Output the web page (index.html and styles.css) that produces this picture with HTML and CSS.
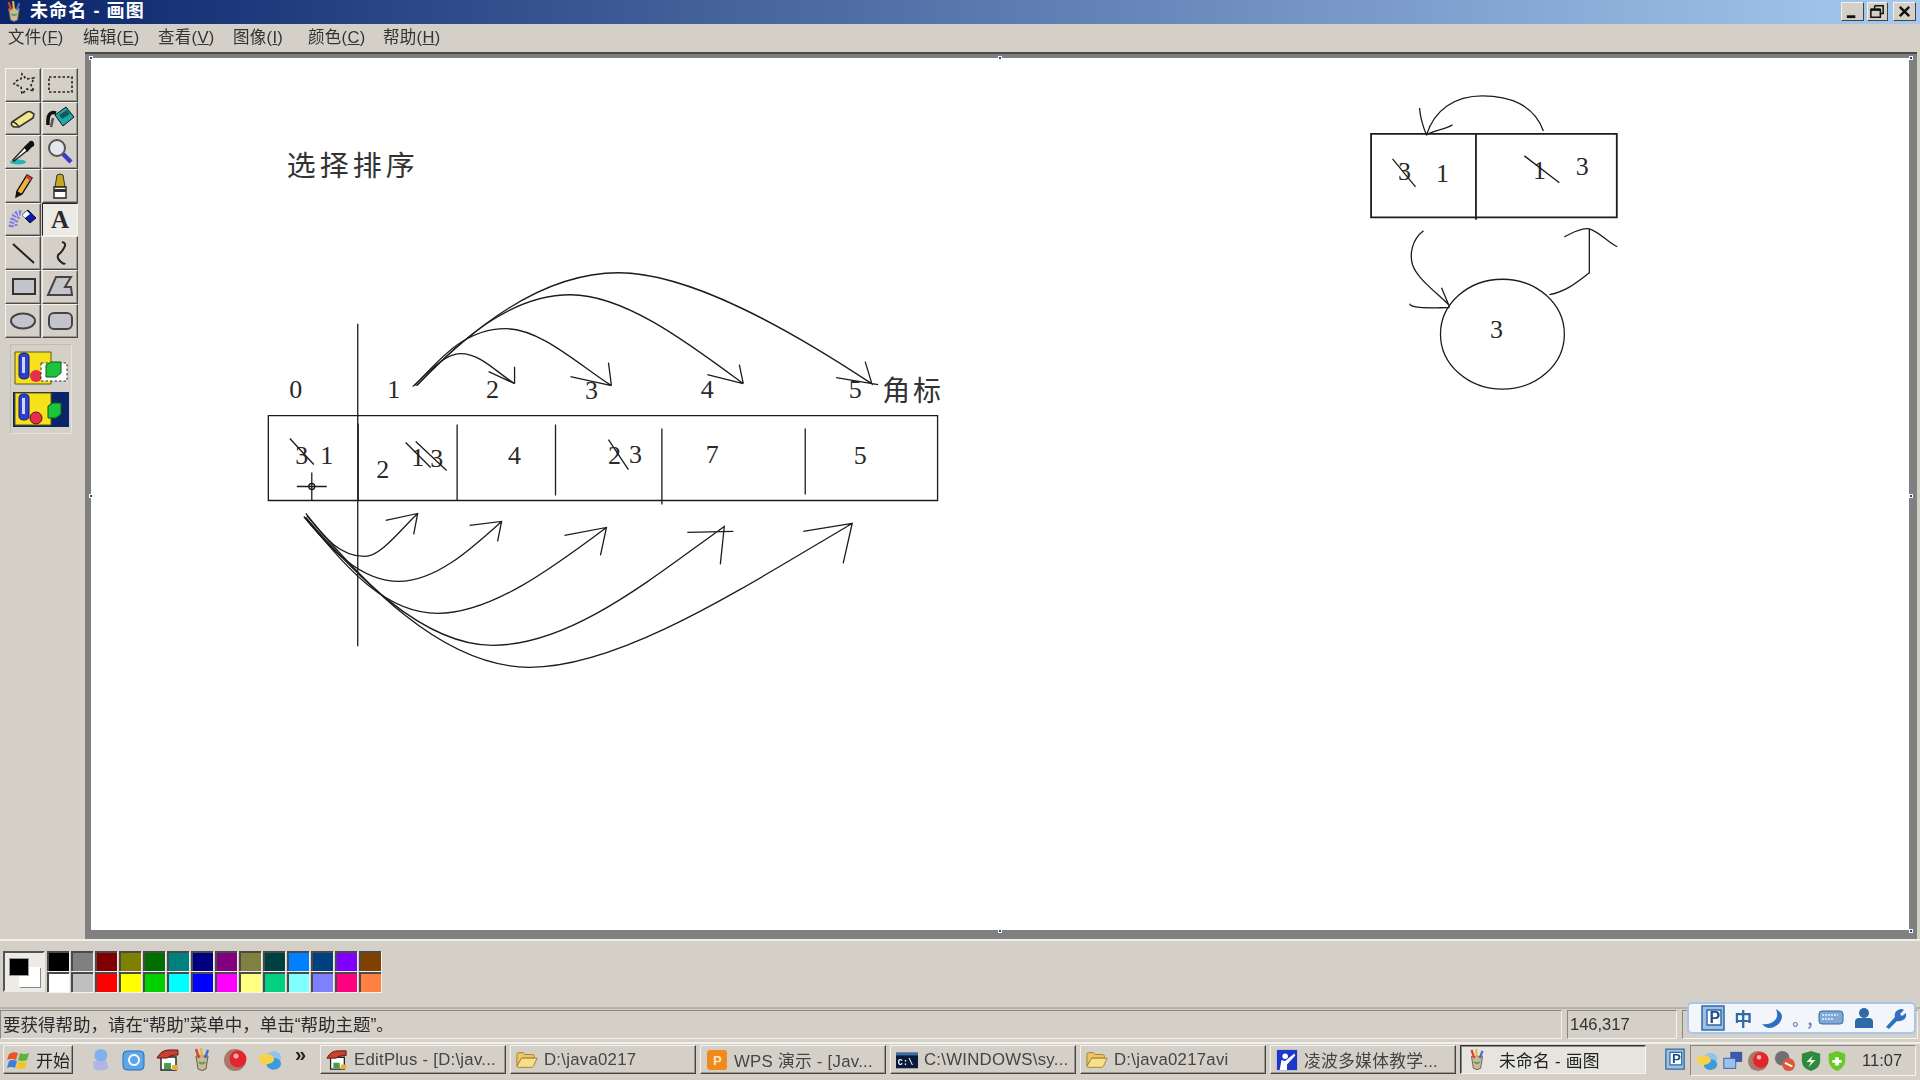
FILE: index.html
```html
<!DOCTYPE html>
<html lang="zh-CN">
<head>
<meta charset="utf-8">
<title>未命名 - 画图</title>
<link rel="stylesheet" href="styles.css">
</head>
<body>
<svg class="defs" width="0" height="0">
  <defs>
    <symbol id="paint" viewBox="0 0 20 24">
      <path d="M4 8l2 13q4 3 8 0l2-13z" fill="#c8b9a0" stroke="#6d5a4a"/>
      <path d="M4 1l3 9" stroke="#d8432c" stroke-width="2.4"/>
      <path d="M9 0l1 10" stroke="#e2b93c" stroke-width="2.4"/>
      <path d="M16 2l-3 8" stroke="#3f6fc8" stroke-width="2.4"/>
      <path d="M7 14q3 3 6 0" stroke="#58a34d" stroke-width="2" fill="none"/>
    </symbol>
    <symbol id="folder" viewBox="0 0 24 20">
      <path d="M1 16V4q0-2 2-2h5l2 2h8q2 0 2 2v2H7z" fill="#e8c768" stroke="#a67c1e"/>
      <path d="M1 17L6 8h17l-4 9q-1 1-2 1H3q-2 0-2-1z" fill="#f7e08c" stroke="#a67c1e"/>
    </symbol>
    <symbol id="editplus" viewBox="0 0 24 24">
      <path d="M5 9h15v13H5z" fill="#fff" stroke="#222" stroke-width="1.4"/>
      <path d="M1 10Q5 2 13 2h9v5q-8 0-11 3z" fill="#c9402f" stroke="#5c1a12"/>
      <path d="M8 15h7v6H8z" fill="#4a9c4a"/><path d="M16 17h6v5h-6z" fill="#e6b23c"/>
    </symbol>
    <symbol id="balloon" viewBox="0 0 26 22">
      <ellipse cx="17" cy="8" rx="8" ry="6.5" fill="#8ec4ee"/>
      <ellipse cx="17" cy="15" rx="8" ry="6.5" fill="#3c9ae0"/>
      <ellipse cx="9" cy="10" rx="8.5" ry="5.5" fill="#f6d24a"/>
      <path d="M6 14l2 4 3-4z" fill="#f6d24a"/>
    </symbol>
    <symbol id="redball" viewBox="0 0 24 24">
      <circle cx="11" cy="12" r="11" fill="#a8786a"/>
      <circle cx="14" cy="11" r="8.5" fill="#e3262c"/>
      <circle cx="12" cy="8" r="2.5" fill="#f8b0b0"/>
    </symbol>
    <symbol id="pbox" viewBox="0 0 24 26">
      <path d="M1 1h22v24H1z" fill="#9fc0de" stroke="#2f6aa8" stroke-width="1.5"/>
      <path d="M6 5h14v15H6z" fill="#fff" stroke="#2f6aa8" stroke-width="1.5"/>
      <text x="8.5" y="18" class="pglyph">P</text>
    </symbol>
    <symbol id="shapes" viewBox="0 0 54 34">
      <path d="M1 1h36v32H1z" fill="#f5e21a" stroke="#5e5a10"/>
      <path d="M5 6q0-4 5-4t5 4v18q0 4-5 4t-5-4z" fill="#2c3fd0" stroke="#101a70"/>
      <path d="M8 6h3v16H8z" fill="#cfd6ff"/>
    </symbol>
  </defs>
</svg>

<header class="titlebar">
  <svg class="title-icon"><use href="#paint"/></svg>
  <span class="title-text">未命名 - 画图</span>
  <div class="win-btns">
    <button class="win-btn"><svg viewBox="0 0 22 18"><path d="M5 13h9v3H5z" fill="#111"/></svg></button>
    <button class="win-btn win-btn-narrow"><svg viewBox="0 0 20 18"><path d="M7 3h9v8h-3M7 3v3" fill="none" stroke="#111" stroke-width="1.6"/><path d="M3 7h10v8H3z" fill="none" stroke="#111" stroke-width="1.6"/><path d="M3 7h10" stroke="#111" stroke-width="2.6"/></svg></button>
    <button class="win-btn win-btn-close"><svg viewBox="0 0 22 18"><path d="M6 4l10 10M16 4L6 14" stroke="#111" stroke-width="2.6"/></svg></button>
  </div>
</header>

<nav class="menubar">
  <span class="menu-item">文件(<u>F</u>)</span>
  <span class="menu-item">编辑(<u>E</u>)</span>
  <span class="menu-item">查看(<u>V</u>)</span>
  <span class="menu-item">图像(<u>I</u>)</span>
  <span class="menu-item">颜色(<u>C</u>)</span>
  <span class="menu-item">帮助(<u>H</u>)</span>
</nav>

<main class="workspace">
  <aside class="toolbox">
    <div class="tools">
      <button class="tool"><svg viewBox="0 0 30 28"><path d="M8 10l5-2 1-5 4 5 8-1-3 7 3 6-7-2-5 5-1-7-7-3z" fill="none" stroke="#222" stroke-width="1.6" stroke-dasharray="2.5 2"/></svg></button>
      <button class="tool"><svg viewBox="0 0 30 28"><path d="M4 6h23v15H4z" fill="none" stroke="#222" stroke-width="1.6" stroke-dasharray="2.5 2"/></svg></button>
      <button class="tool"><svg viewBox="0 0 30 28"><path d="M4 17L19 7q2-1 4 0l3 2-1 4-14 9H6q-4-2-2-5z" fill="#f4e88a" stroke="#333" stroke-width="1.6"/><path d="M4 17q4 0 7 5" stroke="#333" stroke-width="1.3" fill="none"/></svg></button>
      <button class="tool"><svg viewBox="0 0 30 28"><path d="M10 10l11-8 8 10-11 9z" fill="#20a8a8" stroke="#111"/><path d="M14 10l8-5 3 4-8 5z" fill="#0c5a5a"/><path d="M11 8Q2 5 3 20" stroke="#111" stroke-width="3.5" fill="none"/><path d="M6 22l2-9" stroke="#555" stroke-width="2.500"/></svg></button>
      <button class="tool"><svg viewBox="0 0 30 28"><ellipse cx="10" cy="24" rx="8" ry="2.5" fill="#28b4b4"/><path d="M6 23l-1-1 12-13 3 3z" fill="#fff" stroke="#222" stroke-width="1.4"/><path d="M16 9l6-6q3-1 4 2t-2 4l-5 5z" fill="#111"/></svg></button>
      <button class="tool"><svg viewBox="0 0 30 28"><circle cx="12" cy="10" r="8" fill="#e6e6ee" stroke="#555" stroke-width="2"/><path d="M18 16l8 8" stroke="#3a3ac8" stroke-width="4.5"/></svg></button>
      <button class="tool"><svg viewBox="0 0 30 28"><path d="M9 19L19 3l5 3-10 16-6 3z" fill="#f0b040" stroke="#111" stroke-width="1.4"/><path d="M19 3l5 3-1.500 2.500-5-3z" fill="#d23a3a"/><path d="M8 25l1-6 5 3z" fill="#111"/></svg></button>
      <button class="tool"><svg viewBox="0 0 30 28"><path d="M12 3q3-2 6 0l2 12H10z" fill="#c8a81e" stroke="#333"/><path d="M9 15h12v11H9z" fill="#fff" stroke="#222" stroke-width="1.4"/><path d="M9 17h12v3H9z" fill="#333"/></svg></button>
      <button class="tool"><svg viewBox="0 0 30 28"><path d="M14 9l6-5 8 8-6 5z" fill="#0a1ea8" stroke="#111"/><path d="M14 9l5-4 3 3-5 4z" fill="#fff"/><path d="M13 7Q5 5 3 22" stroke="#7a7ae6" stroke-width="5" stroke-dasharray="2 1.500" fill="none"/><path d="M11 11Q8 14 8 20" stroke="#7a7ae6" stroke-width="3" stroke-dasharray="2 2" fill="none"/></svg></button>
      <button class="tool tool-active"><span class="tool-a">A</span></button>
      <button class="tool"><svg viewBox="0 0 30 28"><path d="M5 5l21 19" stroke="#222" stroke-width="2"/></svg></button>
      <button class="tool"><svg viewBox="0 0 30 28"><path d="M17 3q5 1 2 6t-5 6q-3 3 1 7t5 2" stroke="#222" stroke-width="2" fill="none"/></svg></button>
      <button class="tool"><svg viewBox="0 0 30 28"><path d="M5 6h22v15H5z" fill="#c4c4cc" stroke="#333" stroke-width="2"/></svg></button>
      <button class="tool"><svg viewBox="0 0 30 28"><path d="M11 4h15l-6 10h6l1 8H3z" fill="#c4c4cc" stroke="#444" stroke-width="2"/></svg></button>
      <button class="tool"><svg viewBox="0 0 30 28"><ellipse cx="15" cy="14" rx="12" ry="7.500" fill="#c4c4cc" stroke="#444" stroke-width="2"/></svg></button>
      <button class="tool"><svg viewBox="0 0 30 28"><rect x="4" y="6" width="23" height="16" rx="5" fill="#c4c4cc" stroke="#444" stroke-width="2"/></svg></button>
    </div>
    <div class="tool-options">
      <div class="option">
        <svg viewBox="0 0 54 34"><use href="#shapes" width="54" height="34"/><circle cx="22" cy="25" r="6" fill="#e62e4a"/><path d="M27 12h26v18H27z" fill="#fff" stroke="#333" stroke-dasharray="2.500 2"/><path d="M32 14l5-3h10v11l-5 4H32z" fill="#1cc43c" stroke="#0b5a1e"/></svg>
      </div>
      <div class="option option-on">
        <svg viewBox="0 0 54 34"><use href="#shapes" width="54" height="34"/><circle cx="22" cy="26" r="6" fill="#e62e4a" stroke="#5a1010"/><path d="M34 14l5-3h8v11l-5 4h-8z" fill="#1cc43c" stroke="#0b5a1e"/></svg>
      </div>
    </div>
  </aside>

  <section class="canvas-frame">
    <div class="canvas">
      <svg class="drawing" viewBox="91 58 1818 873">
        <text x="286" y="176" class="heading">选择排序</text>

        <g class="num">
          <text x="295" y="400">0</text><text x="393" y="400">1</text><text x="492" y="400">2</text>
          <text x="591" y="401">3</text><text x="707" y="400">4</text><text x="855" y="400">5</text>
          <text x="301" y="466">3</text><text x="326" y="466">1</text><text x="382" y="480">2</text>
          <text x="417" y="468">1</text><text x="436" y="469">3</text><text x="514" y="466">4</text>
          <text x="614" y="466">2</text><text x="635" y="465">3</text><text x="712" y="465">7</text>
          <text x="860" y="466">5</text>
          <text x="1405" y="182">3</text><text x="1443" y="184">1</text><text x="1540" y="181">1</text>
          <text x="1583" y="177">3</text><text x="1497" y="340">3</text>
        </g>
        <text x="882" y="401" class="label">角标</text>

        <g class="ink">
          <path d="M267.500 416H937.500V501H267.500z"/>
          <path d="M357 324V647M357.500 424V501" />
          <path d="M456.500 425V501M555 425V496M661.500 429V505M805 429V495"/>
          <path d="M289 439L313 465M405 443L430 468M415 442L446 471M608 440L628 470"/>
          <path d="M296 487H326M311 473V501"/><circle cx="311" cy="487" r="3"/>

          <path d="M412 387C430 370 445 354 460 354C480 354 495 372 514 384M514 367V384M488 372L514 384"/>
          <path d="M414 386C440 358 465 329 505 329C540 329 578 365 611 386M608 363L611 386M570 377L611 386"/>
          <path d="M416 386C460 340 510 295 570 295C625 295 690 345 743 384M739 365L743 384M707 375L743 384"/>
          <path d="M416 386C470 330 540 273 618 273C690 273 790 330 873 385M865 362L872 385M836 378L878 385"/>

          <path d="M305 514C325 540 340 557 364 557C380 557 400 530 417 514M385 521L417 514L413 535"/>
          <path d="M303 517C330 550 360 582 398 582C435 582 470 550 501 522M469 526L501 522L497 542"/>
          <path d="M304 518C340 560 380 614 437 614C490 614 550 570 606 528M564 536L606 528L600 556"/>
          <path d="M305 518C350 570 420 646 492 646C570 646 650 580 724 527L720 565M687 533L733 532"/>
          <path d="M306 516C360 580 440 668 529 668C620 668 740 590 852 524L843 564M803 532L852 524"/>

          <path class="heavy" d="M1371.500 134H1617.500V217.500H1371.500z"/>
          <path class="heavy" d="M1476.500 134V220"/>
          <path d="M1393 159L1416 187M1525 156L1560 183"/>
          <path d="M1544 131C1535 105 1510 96 1483 96C1455 96 1435 110 1427 135M1420 108C1421 120 1424 128 1427 135C1435 130 1445 130 1453 125"/>
          <ellipse cx="1503" cy="334.500" rx="62" ry="55"/>
          <path d="M1424 231C1412 240 1410 255 1413 265C1418 280 1440 295 1450 306M1410 304C1412 309 1430 308 1450 308M1442 288L1450 307"/>
          <path d="M1550 295C1565 292 1575 285 1590 273V229M1565 237C1572 234 1580 228 1590 229C1600 232 1608 242 1618 247"/>
        </g>
      </svg>
    </div>
    <i class="handle handle-tl"></i><i class="handle handle-tm"></i><i class="handle handle-tr"></i>
    <i class="handle handle-ml"></i><i class="handle handle-mr"></i>
    <i class="handle handle-bm"></i><i class="handle handle-br"></i>
  </section>
</main>

<section class="palette">
  <div class="current-colors">
    <span class="cur-back"></span><span class="cur-fore"></span>
  </div>
  <div class="swatches">
    <i class="sw c-000000"></i><i class="sw c-808080"></i><i class="sw c-800000"></i><i class="sw c-808000"></i><i class="sw c-006e00"></i><i class="sw c-008080"></i><i class="sw c-000080"></i><i class="sw c-800080"></i><i class="sw c-808040"></i><i class="sw c-004040"></i><i class="sw c-0080ff"></i><i class="sw c-004080"></i><i class="sw c-8000ff"></i><i class="sw c-804000"></i>
    <i class="sw c-ffffff"></i><i class="sw c-c0c0c0"></i><i class="sw c-ff0000"></i><i class="sw c-ffff00"></i><i class="sw c-00d000"></i><i class="sw c-00ffff"></i><i class="sw c-0000ff"></i><i class="sw c-ff00ff"></i><i class="sw c-ffff80"></i><i class="sw c-00d080"></i><i class="sw c-80ffff"></i><i class="sw c-8080ff"></i><i class="sw c-ff0080"></i><i class="sw c-ff8040"></i>
  </div>
</section>

<section class="statusbar">
  <div class="status-main">要获得帮助，请在“帮助”菜单中，单击“帮助主题”。</div>
  <div class="status-coord">146,317</div>
  <div class="status-rest"></div>
  <div class="ime">
    <svg class="ime-p"><use href="#pbox"/></svg>
    <span class="ime-zh">中</span>
    <svg class="ime-ic" viewBox="0 0 22 22"><path d="M15 2q3 8-2 12t-12 3q5 6 12 3t8-10q0-5-6-8z" fill="#2f6fc0"/></svg>
    <span class="ime-dots">。,</span>
    <svg class="ime-ic ime-kb" viewBox="0 0 26 18"><rect x="1" y="2" width="24" height="13" rx="3" fill="#7fa8d8" stroke="#2f6aa8"/><path d="M4 6h16M4 10h12" stroke="#eaf2fb" stroke-width="1.500" stroke-dasharray="2 1"/></svg>
    <svg class="ime-ic" viewBox="0 0 22 22"><circle cx="11" cy="6" r="5" fill="#2f6aa8"/><path d="M2 21v-6q0-4 4-4h10q4 0 4 4v6z" fill="#2f6aa8"/></svg>
    <svg class="ime-ic" viewBox="0 0 22 22"><path d="M2 20l9-10q-1-5 3-7t6 0l-4 4 2 2 4-3q1 5-3 7t-6 1l-8 8z" fill="#2f6fc0"/></svg>
  </div>
</section>

<footer class="taskbar">
  <button class="start">
    <svg viewBox="0 0 24 22"><path d="M2 5q4-3 9-1l-2 7q-4-2-9 0z" fill="#e8552a"/><path d="M13 4q4 2 9 0l-2 7q-5 2-9 0z" fill="#5db43a"/><path d="M0 12q4-2 8 0l-2 7q-4-2-8 0z" fill="#3f7fd8" transform="translate(2 0)"/><path d="M11 12q4 2 9 0l-2 7q-5 2-9 0z" fill="#f3c32c"/></svg>
    <span>开始</span>
  </button>
  <div class="quick">
    <svg viewBox="0 0 22 26"><circle cx="12" cy="8" r="7" fill="#7fb2ec"/><path d="M4 14h14l2 8q-8 5-16 0z" fill="#b0b4e6"/></svg>
    <svg viewBox="0 0 24 24"><rect x="1" y="3" width="21" height="19" rx="4" fill="#5ca6ea" stroke="#2b6cb8"/><circle cx="12" cy="12" r="5" fill="none" stroke="#fff" stroke-width="2"/></svg>
    <svg><use href="#editplus"/></svg>
    <svg><use href="#paint"/></svg>
    <svg><use href="#redball"/></svg>
    <svg><use href="#balloon"/></svg>
    <span class="chevron">»</span>
  </div>
  <div class="tasks">
    <button class="task"><svg><use href="#editplus"/></svg><span>EditPlus - [D:\jav...</span></button>
    <button class="task"><svg><use href="#folder"/></svg><span>D:\java0217</span></button>
    <button class="task"><svg viewBox="0 0 22 22"><rect x="1" y="1" width="20" height="20" rx="3" fill="#f08a1c"/><text x="7" y="16" class="wpsglyph">P</text></svg><span>WPS 演示 - [Jav...</span></button>
    <button class="task"><svg viewBox="0 0 24 20"><path d="M0 2h24v17H0z" fill="#0a1a3c"/><path d="M0 2h24v3H0z" fill="#3a6ea8"/><text x="2" y="15" class="cmdglyph">C:\</text></svg><span>C:\WINDOWS\sy...</span></button>
    <button class="task"><svg><use href="#folder"/></svg><span>D:\java0217avi</span></button>
    <button class="task"><svg viewBox="0 0 24 24"><path d="M1 1h22v22H1z" fill="#1c38c8"/><circle cx="10" cy="8" r="3" fill="#fff"/><path d="M4 23l2-11 4 1 10-8 1 2-9 10v6z" fill="#fff"/></svg><span>凌波多媒体教学...</span></button>
    <button class="task task-active"><svg><use href="#paint"/></svg><span>未命名 - 画图</span></button>
  </div>
  <svg class="tray-p"><use href="#pbox"/></svg>
  <div class="tray">
    <svg viewBox="0 0 26 22"><use href="#balloon" width="26" height="22"/></svg>
    <svg viewBox="0 0 24 24"><rect x="9" y="2" width="13" height="11" fill="#3c5aa8"/><rect x="2" y="9" width="13" height="11" fill="#9ac0ee" stroke="#3c5aa8"/></svg>
    <svg viewBox="0 0 24 24"><use href="#redball" width="24" height="24"/></svg>
    <svg viewBox="0 0 24 24"><circle cx="9" cy="9" r="8" fill="#6f6f74"/><circle cx="16" cy="16" r="7" fill="#e0583c"/><path d="M12 14l8 4" stroke="#fff" stroke-width="2"/></svg>
    <svg viewBox="0 0 24 24"><path d="M12 1l10 3v8q0 8-10 11Q2 20 2 12V4z" fill="#2c8c3c"/><path d="M14 6l-7 7h5l-3 6 8-8h-5z" fill="#e8f5e0"/></svg>
    <svg viewBox="0 0 24 24"><path d="M12 1l9 3v9q-2 7-9 10-7-3-9-10V4z" fill="#68c828"/><path d="M10 8h4v3h3v3h-3v3h-4v-3H7v-3h3z" fill="#fff"/></svg>
    <time class="clock">11:07</time>
  </div>
</footer>
</body>
</html>
```

FILE: styles.css
```css
* { box-sizing: border-box; }
html, body { margin: 0; height: 100%; overflow: hidden; }
body {
  display: flex;
  flex-direction: column;
  width: 1920px;
  height: 1080px;
  background: #d4d0c8;
  color: #1c1c1c;
  font-family: "Liberation Sans", "Noto Sans CJK SC", sans-serif;
  filter: blur(0.45px);
}
button { font: inherit; color: inherit; margin: 0; padding: 0; }
.defs { position: absolute; }
.pglyph { font: bold 16px "Liberation Sans", sans-serif; fill: #1f4f8a; }
.wpsglyph { font: bold 13px "Liberation Sans", sans-serif; fill: #ffe9c0; }
.cmdglyph { font: bold 9px "Liberation Mono", monospace; fill: #fff; }

/* title bar */
.titlebar {
  flex: 0 0 24px;
  height: 24px;
  min-height: 0;
  overflow: hidden;
  display: flex;
  align-items: center;
  padding: 0 4px 0 5px;
  background: linear-gradient(90deg, #0a246a 0%, #a6caf0 100%);
  color: #fff;
}
.title-icon { width: 18px; height: 22px; flex: none; }
.title-text { margin: -2px 0 0 7px; font-size: 18px; font-weight: 700; letter-spacing: 1.1px; line-height: 1; white-space: nowrap; }
.win-btns { margin-left: auto; margin-top: -1px; display: flex; gap: 3px; align-items: center; }
.win-btn {
  width: 23px; height: 19px;
  display: block;
  background: #d4d0c8;
  border: 1px solid;
  border-color: #f4f2ec #444 #444 #f4f2ec;
}
.win-btn svg { display: block; width: 100%; height: 100%; }
.win-btn-narrow { width: 21px; }
.win-btn-close { margin-left: 2px; }

/* menu */
.menubar {
  flex: 0 0 28px;
  height: 28px;
  min-height: 0;
  overflow: hidden;
  display: flex;
  align-items: center;
  gap: 17px;
  padding: 0 0 2px 8px;
  font-size: 16.500px;
  line-height: 1;
  color: #333;
}
.menu-item { white-space: nowrap; width: 58px; letter-spacing: .3px; }
.menu-item u { text-decoration-thickness: 1px; }

/* workspace */
.workspace { flex: 1 1 0; min-height: 0; display: flex; }
.toolbox { flex: 0 0 85px; padding: 16px 0 0 5px; background: #d4d0c8; }
.tools { display: grid; grid-template-columns: 36px 36px; grid-auto-rows: 33.700px; column-gap: 1px; width: 73px; }
.tool {
  display: flex; align-items: center; justify-content: center;
  background: #d4d0c8;
  border: 1px solid;
  border-color: #f4f2ec #4a4a4a #4a4a4a #f4f2ec;
  box-shadow: inset -1px -1px 0 #9a978f;
}
.tool svg { width: 30px; height: 28px; display: block; }
.tool-active { background: #eceae5; border-color: #222 #f4f2ec #f4f2ec #222; box-shadow: none; }
.tool-a { font: 700 25px "Liberation Serif", serif; color: #2a2a2a; line-height: 1; }
.tool-options {
  width: 62px; height: 90px;
  margin: 6px 0 0 5px;
  padding: 6px 2px;
  border: 1px solid;
  border-color: #c0bdb5 #e6e4de #e6e4de #c0bdb5;
  display: flex; flex-direction: column; gap: 7px;
}
.option { height: 34px; display: flex; justify-content: center; align-items: center; }
.option svg { width: 54px; height: 34px; display: block; }
.option-on { height: 38px; background: #0a246a; }

.canvas-frame {
  position: relative;
  flex: 1 1 0;
  min-width: 0;
  margin-right: 3px;
  padding: 6px 8px 9px 6px;
  background: #808080;
  box-shadow: inset 0 2px 0 #4a4a4a;
}
.canvas { height: 100%; background: #fff; }
.drawing { display: block; width: 100%; height: 100%; }
.handle { position: absolute; width: 4px; height: 4px; background: #2a3fa0; border: 1px solid #fff; }
.handle-tl { left: 4px; top: 4px; }
.handle-tm { left: 913px; top: 4px; }
.handle-tr { right: 4px; top: 4px; }
.handle-ml { left: 4px; top: 442px; }
.handle-mr { right: 4px; top: 442px; }
.handle-bm { left: 913px; bottom: 6px; }
.handle-br { right: 4px; bottom: 6px; }

.heading { font: 400 29px "Noto Sans CJK SC", sans-serif; letter-spacing: 4px; fill: #333; }
.label { font: 400 28px "Noto Sans CJK SC", sans-serif; letter-spacing: 3px; fill: #333; }
.num { transform: translateY(-1.500px); }
.num text { font: 400 26px "Liberation Serif", serif; fill: #2a2a2a; text-anchor: middle; }
.ink path, .ink circle, .ink ellipse { fill: none; stroke: #1c1c1c; stroke-width: 1.3; }
.ink path.heavy { stroke-width: 1.8; }

/* palette */
.palette {
  flex: 0 0 70px;
  display: flex;
  align-items: flex-start;
  gap: 2px;
  padding: 10px 0 0 3px;
  border-top: 2px solid #f1efe9;
  border-bottom: 2px solid #b4b1a9;
}
.current-colors { position: relative; width: 42px; height: 41px; background: #ecebe6; border: 2px solid; border-color: #555 #ecebe6 #ecebe6 #555; }
.cur-fore { position: absolute; left: 5px; top: 6px; width: 18px; height: 16px; background: #000; box-shadow: 0 0 0 1px #999; }
.cur-back { position: absolute; left: 14px; top: 14px; width: 21px; height: 20px; background: #fff; box-shadow: 1px 1px 0 #888; }
.swatches { display: grid; grid-template-columns: repeat(14, 22px); grid-auto-rows: 20px; gap: 1px 2px; }
.sw { display: block; border-top: 2px solid #4a4a4a; border-left: 2px solid #4a4a4a; box-shadow: 1px 1px 0 #f4f2ec; }
.c-000000 { background: #000; } .c-808080 { background: #808080; } .c-800000 { background: #800000; }
.c-808000 { background: #808000; } .c-006e00 { background: #006e00; } .c-008080 { background: #008080; }
.c-000080 { background: #000080; } .c-800080 { background: #800080; } .c-808040 { background: #808040; }
.c-004040 { background: #004040; } .c-0080ff { background: #0080ff; } .c-004080 { background: #004080; }
.c-8000ff { background: #8000ff; } .c-804000 { background: #804000; } .c-ffffff { background: #fff; }
.c-c0c0c0 { background: #c0c0c0; } .c-ff0000 { background: #f00; } .c-ffff00 { background: #ff0; }
.c-00d000 { background: #00d000; } .c-00ffff { background: #0ff; } .c-0000ff { background: #00f; }
.c-ff00ff { background: #f0f; } .c-ffff80 { background: #ffff80; } .c-00d080 { background: #00d080; }
.c-80ffff { background: #80ffff; } .c-8080ff { background: #8080ff; } .c-ff0080 { background: #ff0080; }
.c-ff8040 { background: #ff8040; }

/* status bar */
.statusbar { position: relative; flex: 0 0 32px; display: flex; gap: 5px; padding: 1px 2px 3px 0; }
.status-main, .status-coord, .status-rest {
  display: flex; align-items: center;
  border: 1px solid;
  border-color: #8a877f #f4f2ec #f4f2ec #8a877f;
  font-size: 17.500px;
  white-space: nowrap;
}
.status-main { width: 1562px; padding: 0 0 2px 2px; color: #2a2a2a; }
.status-coord { width: 110px; padding-left: 2px; font-size: 16.500px; color: #333; }
.status-rest { flex: 1 1 0; }

.ime {
  position: absolute;
  left: 1687px; top: -7px;
  width: 229px; height: 32px;
  display: flex; align-items: center; justify-content: space-between;
  padding: 0 8px 0 12px;
  background: #f2f5fa;
  border: 2px solid #a9c6ea;
  border-radius: 5px;
  color: #2f6aa8;
}
.ime-p { width: 24px; height: 26px; }
.ime-zh { font: 700 18px "Noto Sans CJK SC", sans-serif; }
.ime-dots { font: 700 15px "Noto Sans CJK SC", sans-serif; color: #5a86b8; width: 16px; white-space: nowrap; }
.ime-ic { width: 22px; height: 22px; }
.ime-kb { width: 26px; height: 18px; }

/* task bar */
.taskbar {
  flex: 0 0 38px;
  display: flex;
  align-items: flex-start;
  padding: 1px 4px 0 3px;
  border-top: 2px solid #f1efe9;
}
.start, .task {
  display: flex; align-items: center;
  height: 29px;
  background: #d4d0c8;
  border: 1px solid;
  border-color: #f4f2ec #444 #444 #f4f2ec;
  box-shadow: inset -1px -1px 0 #9a978f;
  text-align: left;
}
.start { width: 70px; padding-left: 3px; gap: 5px; font-size: 17px; color: #222; }
.start svg { width: 24px; height: 22px; flex: none; }
.quick { width: 247px; height: 29px; padding-left: 15px; display: flex; align-items: center; gap: 10px; position: relative; }
.quick svg { width: 24px; height: 24px; flex: none; }
.chevron { font-size: 20px; font-weight: 700; margin-top: -11px; margin-left: 3px; color: #222; line-height: 1; }
.tasks { display: grid; grid-template-columns: repeat(7, 186px); column-gap: 4px; width: 1328px; }
.task { width: 186px; padding-left: 5px; gap: 6px; font-size: 16.800px; letter-spacing: .25px; color: #444; white-space: nowrap; overflow: hidden; }
.task svg { width: 22px; height: 22px; flex: none; }
.task-active { background: #e6e4de; border-color: #333 #f4f2ec #f4f2ec #333; box-shadow: inset 1px 1px 0 #8a877f; color: #222; gap: 11px; }
.tray-p { width: 20px; height: 26px; margin: 1px 0 0 17px; flex: none; }
.tray {
  flex: 1 1 0;
  margin-left: 5px;
  height: 31px;
  display: flex; align-items: center;
  gap: 4px;
  padding-left: 5px;
  border: 1px solid;
  border-color: #8a877f #f4f2ec #f4f2ec #8a877f;
}
.tray svg { width: 22px; height: 22px; flex: none; }
.clock { margin-left: 10px; font-size: 16.500px; color: #333; white-space: nowrap; }
```
